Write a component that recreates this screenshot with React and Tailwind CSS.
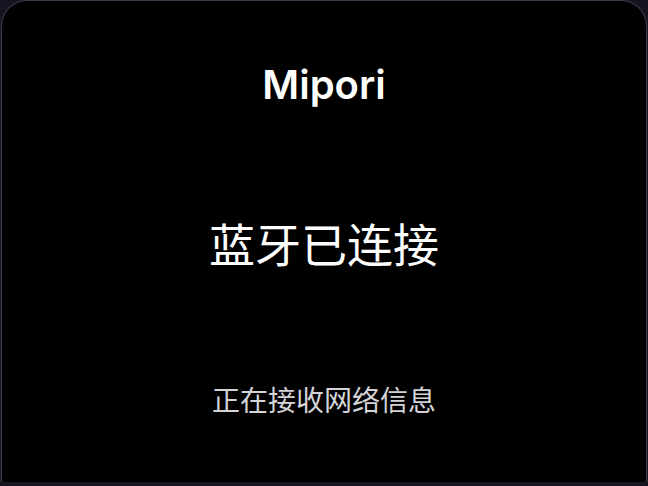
import React from "react";

const App = () => {
    return (
        <div className="w-[648px] h-[486px] bg-[#151622] overflow-hidden">
            <div
                className="mx-px h-[482px] bg-black rounded-t-[26px] border border-b-0 border-[#3a3c4e] flex flex-col items-center text-white"
                style={{ fontFamily: '"Inter", "Noto Sans CJK SC", sans-serif' }}
            >
                <h1 className="mt-[60px] text-[40px] leading-[48px] font-semibold">Mipori</h1>
                <p className="mt-[106px] text-[46px] leading-[60px]">蓝牙已连接</p>
                <p className="mt-[106px] text-[28px] leading-[40px] text-[#d4d4d8]">正在接收网络信息</p>
            </div>
        </div>
    );
};

export default App;
